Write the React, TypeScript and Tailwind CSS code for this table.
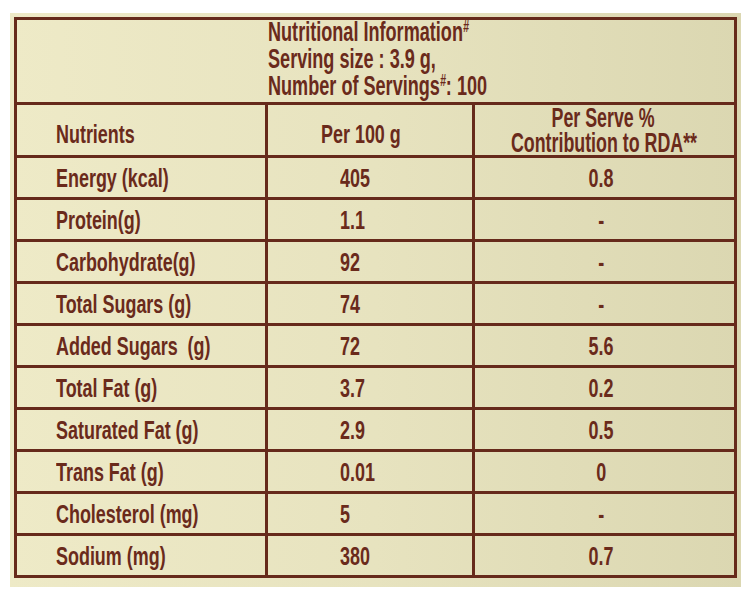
const rows: [string, string, string][] = [
  ["Energy (kcal)", "405", "0.8"],
  ["Protein(g)", "1.1", "-"],
  ["Carbohydrate(g)", "92", "-"],
  ["Total Sugars (g)", "74", "-"],
  ["Added Sugars  (g)", "72", "5.6"],
  ["Total Fat (g)", "3.7", "0.2"],
  ["Saturated Fat (g)", "2.9", "0.5"],
  ["Trans Fat (g)", "0.01", "0"],
  ["Cholesterol (mg)", "5", "-"],
  ["Sodium (mg)", "380", "0.7"],
];

// condensed look: Liberation Sans bold squeezed horizontally
function Narrow({ children, center = false }: { children: React.ReactNode; center?: boolean }) {
  return (
    <span className={`inline-block whitespace-pre scale-x-[0.69] ${center ? "origin-center" : "origin-left"}`}>
      {children}
    </span>
  );
}

export default function App() {
  return (
    <div className="w-[752px] h-[600px] bg-white pt-[13px] pl-[10px] font-['Liberation_Sans',Arial,sans-serif] font-bold text-[#6a2a1b]">
      <div className="w-[731px] h-[574px] pt-[4px] pl-[4px] bg-gradient-to-r from-[#eeeac7] via-[#e7e3bf] to-[#dbd7b1]">
        <div className="w-[723px] border-[3px] border-[#662a1b]">
          {/* title block */}
          <div className="h-[85px] border-b-[3px] border-[#662a1b] pl-[251px]">
            <div className="inline-block origin-top-left scale-x-[0.67] text-[27px] leading-[27px] -mt-[1px] whitespace-nowrap">
              <div>
                Nutritional Information
                <span className="align-top text-[16px] leading-none italic">#</span>
              </div>
              <div>Serving size : 3.9 g,</div>
              <div>
                Number of Servings
                <span className="align-top text-[16px] leading-none italic">#</span>: 100
              </div>
            </div>
          </div>

          {/* column headings */}
          <div className="grid grid-cols-[251px_207px_1fr] h-[53px] border-b-[3px] border-[#662a1b] text-[26px] leading-[26px]">
            <div className="border-r-[3px] border-[#662a1b] pl-[39px] pt-2 flex items-center">
              <Narrow>Nutrients</Narrow>
            </div>
            <div className="border-r-[3px] border-[#662a1b] pl-[53px] pt-2 flex items-center">
              <Narrow>Per 100 g</Narrow>
            </div>
            <div className="flex flex-col justify-center text-center text-[27px] leading-[24.5px] pt-[1px] pr-[2px]">
              <div>
                <span className="inline-block -mx-[40px] scale-x-[0.66] origin-center whitespace-nowrap">Per Serve %</span>
              </div>
              <div>
                <span className="inline-block -mx-[40px] scale-x-[0.66] origin-center whitespace-nowrap">Contribution to RDA**</span>
              </div>
            </div>
          </div>

          {rows.map(([name, per100, rda], i) => (
            <div
              key={name}
              className={`grid grid-cols-[251px_207px_1fr] text-[26px] leading-[26px] ${
                i < rows.length - 1 ? "h-[42px] border-b-[3px] border-[#662a1b]" : "h-[39px]"
              }`}
            >
              <div className="border-r-[3px] border-[#662a1b] pl-[39px] flex items-center">
                <Narrow>{name}</Narrow>
              </div>
              <div className="border-r-[3px] border-[#662a1b] pl-[72px] flex items-center">
                <Narrow>{per100}</Narrow>
              </div>
              <div className="flex items-center justify-center pr-[6px]">
                <Narrow center>{rda}</Narrow>
              </div>
            </div>
          ))}
        </div>
      </div>
    </div>
  );
}
